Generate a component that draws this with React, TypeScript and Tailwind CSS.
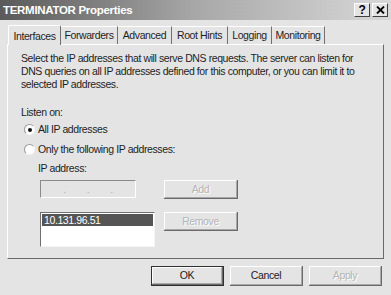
import React from "react";

const tabs = [
  { label: "Interfaces", w: "w-[53px]" },
  { label: "Forwarders", w: "w-[57px]" },
  { label: "Advanced", w: "w-[54px]" },
  { label: "Root Hints", w: "w-[56px]" },
  { label: "Logging", w: "w-[44px]" },
  { label: "Monitoring", w: "w-[53px]" },
];

const Btn = ({
  label,
  disabled,
  isDefault,
  className,
}: {
  label: string;
  disabled?: boolean;
  isDefault?: boolean;
  className?: string;
}) => (
  <div className={`${className ?? ""} ${isDefault ? "border border-[#303030]" : ""} bg-[#e4e4e4]`}>
    <div className="h-full w-full border-r border-b border-[#6a6a6a]">
      <div className="h-full w-full flex items-center justify-center border-t border-l border-white border-r border-b border-r-[#a8a8a8] border-b-[#a8a8a8]">
        <span className={disabled ? "text-[#b4b4b4] [text-shadow:1px_1px_0_#fff]" : "text-[#222]"}>{label}</span>
      </div>
    </div>
  </div>
);

const Radio = ({ checked, label }: { checked?: boolean; label: string }) => (
  <div className="flex items-center gap-[3px] h-[13px]">
    <div className="w-[11px] h-[11px] rounded-full border border-[#9a9a9a] border-r-[#f4f4f4] border-b-[#f4f4f4] bg-white flex items-center justify-center">
      {checked && <div className="w-[4px] h-[4px] rounded-full bg-[#111]" />}
    </div>
    <span>{label}</span>
  </div>
);

export default function App() {
  return (
    <div className="w-[391px] h-[295px] overflow-hidden bg-[#e4e4e4] text-[10.5px] leading-[13px] tracking-[-0.4px] text-[#1e1e1e] font-['Liberation_Sans',Arial,sans-serif]">
      {/* title bar */}
      <div className="h-[20px] flex items-center justify-between pl-[3px] pr-[3px] bg-gradient-to-r from-[#5a5a5a] via-[#a8a8a8] to-[#d8d8d8]">
        <span className="text-white font-bold text-[11.5px] tracking-[-0.3px]">TERMINATOR Properties</span>
        <div className="flex gap-[2px]">
          <div className="w-[16px] h-[14px] bg-[#e4e4e4] border border-white border-r-[#404040] border-b-[#404040] flex items-center justify-center font-bold text-[12px] text-black">
            ?
          </div>
          <div className="w-[16px] h-[14px] bg-[#e4e4e4] border border-white border-r-[#404040] border-b-[#404040] flex items-center justify-center">
            <svg width="9" height="8" viewBox="0 0 9 8">
              <path d="M1 0.5 L8 7.5 M8 0.5 L1 7.5" stroke="#000" strokeWidth="1.8" />
            </svg>
          </div>
        </div>
      </div>

      <div className="px-[7px] pt-[4px]">
        {/* tabs */}
        <div className="flex items-end h-[20px] pl-[1px]">
          {tabs.map((t, i) =>
            i === 0 ? (
              <div
                key={t.label}
                className={`${t.w} relative z-10 h-[20px] -mb-[1px] pt-[4px] text-center bg-[#e4e4e4] border-t border-l border-white border-r border-r-[#707070] rounded-t-[2px]`}
              >
                {t.label}
              </div>
            ) : (
              <div
                key={t.label}
                className={`${t.w} h-[18px] pt-[2px] text-center border-t border-white border-r border-r-[#707070]`}
              >
                {t.label}
              </div>
            )
          )}
        </div>

        {/* panel */}
        <div className="h-[215px] border-t border-l border-white border-r border-b border-r-[#6a6a6a] border-b-[#6a6a6a]">
          <div className="pl-[13px] pr-[10px] pt-[7px]">
            <p className="leading-[13px] whitespace-nowrap">
              Select the IP addresses that will serve DNS requests. The server can listen for
              <br />
              DNS queries on all IP addresses defined for this computer, or you can limit it to
              <br />
              selected IP addresses.
            </p>
            <div className="mt-[15px]">Listen on:</div>
            <div className="mt-[4px] pl-[3px] flex flex-col gap-[7px]">
              <Radio checked label="All IP addresses" />
              <Radio label="Only the following IP addresses:" />
            </div>
            <div className="pl-[17px] mt-[6px]">
              <div>IP address:</div>
              <div className="flex mt-[5px] ml-[2px] gap-[28px] items-start">
                <div className="w-[96px] h-[18px] border border-[#8a8a8a] border-r-white border-b-white flex items-center justify-center gap-[21px] text-[#b0b0b0]">
                  <span>.</span>
                  <span>.</span>
                  <span>.</span>
                </div>
                <Btn label="Add" disabled className="w-[74px] h-[19px]" />
              </div>
              <div className="flex mt-[13px] ml-[2px] gap-[9px] items-start">
                <div className="w-[115px] h-[35px] bg-white border border-[#707070] border-r-[#f4f4f4] border-b-[#f4f4f4]">
                  <div className="bg-[#555555] text-white h-[12px] leading-[12px] pl-[2px] mt-[1px] mx-[1px]">10.131.96.51</div>
                </div>
                <Btn label="Remove" disabled className="w-[74px] h-[19px]" />
              </div>
            </div>
          </div>
        </div>

        {/* bottom buttons */}
        <div className="flex justify-end gap-[6px] mt-[7px] pr-[2px]">
          <Btn label="OK" isDefault className="w-[73px] h-[20px]" />
          <Btn label="Cancel" className="w-[73px] h-[20px]" />
          <Btn label="Apply" disabled className="w-[73px] h-[20px]" />
        </div>
      </div>
    </div>
  );
}
